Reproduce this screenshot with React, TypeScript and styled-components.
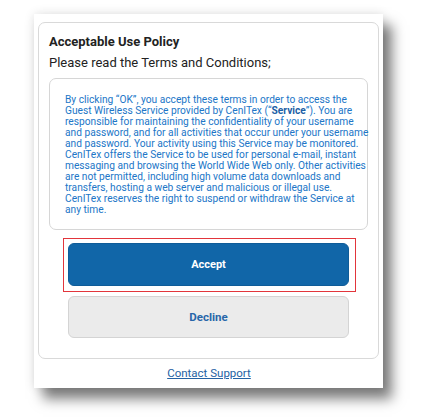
import React from "react";
import styled, { createGlobalStyle } from "styled-components";

const GlobalStyle = createGlobalStyle`
  html, body {
    margin: 0;
    padding: 0;
    background: #ffffff;
  }
  body {
    font-family: Roboto, "Liberation Sans", sans-serif;
  }
`;

const Stage = styled.div`
  width: 426px;
  height: 418px;
  padding-top: 14px;
  box-sizing: border-box;
  overflow: hidden;
`;

const Page = styled.div`
  width: 349px;
  height: 374px;
  margin-left: 34px;
  background: #ffffff;
  box-sizing: border-box;
  padding: 8px 4px 0 4px;
  display: flex;
  flex-direction: column;
  box-shadow: 9px 11px 12px rgba(0, 0, 0, 0.5), 0 0 10px rgba(0, 0, 0, 0.12);
`;

const Card = styled.div`
  height: 337px;
  box-sizing: border-box;
  border: 1px solid #d9d9d9;
  border-radius: 7px;
  padding: 10px 10px 0 10px;
  display: flex;
  flex-direction: column;
`;

const Title = styled.div`
  font-size: 13px;
  font-weight: 700;
  color: #222222;
  line-height: 18px;
`;

const Subtitle = styled.div`
  font-size: 13px;
  color: #222222;
  line-height: 18px;
  margin-top: 3px;
`;

const TermsBox = styled.div`
  margin-top: 6px;
  height: 152px;
  box-sizing: border-box;
  border: 1px solid #d6d6d6;
  border-radius: 7px;
  padding: 15px 10px 0 15px;
  font-size: 10.2px;
  line-height: 11px;
  color: #2176c7;
  white-space: nowrap;

  b {
    font-weight: 700;
    color: #1c5fa6;
  }
`;

const Actions = styled.div`
  display: flex;
  flex-direction: column;
  gap: 4px;
  padding: 0 12px 0 14px;
  margin-top: 8px;
`;

const FocusRing = styled.div`
  border: 1px solid #e2353b;
  padding: 4px 6px 5px 4px;
`;

const Button = styled.button<{ $primary?: boolean }>`
  display: block;
  height: ${(p) => (p.$primary ? "43px" : "42px")};
  width: ${(p) => (p.$primary ? "100%" : "calc(100% - 12px)")};
  margin-left: ${(p) => (p.$primary ? "0" : "5px")};
  border-radius: 6px;
  font-family: Roboto, "Liberation Sans", sans-serif;
  font-size: ${(p) => (p.$primary ? "11px" : "11.5px")};
  font-weight: 700;
  cursor: pointer;
  border: 1px solid ${(p) => (p.$primary ? "#0f5c98" : "#d4d4d4")};
  background: ${(p) => (p.$primary ? "#1166a8" : "#ebebeb")};
  color: ${(p) => (p.$primary ? "#ffffff" : "#2766a9")};
  outline: none;
`;

const Footer = styled.div`
  flex: 1;
  display: flex;
  justify-content: center;
  padding-top: 6px;
`;

const SupportLink = styled.a`
  font-size: 11.5px;
  line-height: 16px;
  color: #2462a3;
  text-decoration: underline;
  margin-left: 1px;
`;

const lines = [
  <>By clicking “OK”, you accept these terms in order to access the</>,
  <>
    Guest Wireless Service provided by CenITex (“<b>Service</b>”). You are
  </>,
  <>responsible for maintaining the confidentiality of your username</>,
  <>and password, and for all activities that occur under your username</>,
  <>and password. Your activity using this Service may be monitored.</>,
  <>CenITex offers the Service to be used for personal e-mail, instant</>,
  <>messaging and browsing the World Wide Web only. Other activities</>,
  <>are not permitted, including high volume data downloads and</>,
  <>transfers, hosting a web server and malicious or illegal use.</>,
  <>CenITex reserves the right to suspend or withdraw the Service at</>,
  <>any time.</>,
];

export default function App() {
  return (
    <Stage>
      <GlobalStyle />
      <Page>
        <Card>
          <Title>Acceptable Use Policy</Title>
          <Subtitle>Please read the Terms and Conditions;</Subtitle>
          <TermsBox>
            {lines.map((line, i) => (
              <div key={i}>{line}</div>
            ))}
          </TermsBox>
          <Actions>
            <FocusRing>
              <Button $primary>Accept</Button>
            </FocusRing>
            <Button>Decline</Button>
          </Actions>
        </Card>
        <Footer>
          <SupportLink href="#">Contact Support</SupportLink>
        </Footer>
      </Page>
    </Stage>
  );
}
